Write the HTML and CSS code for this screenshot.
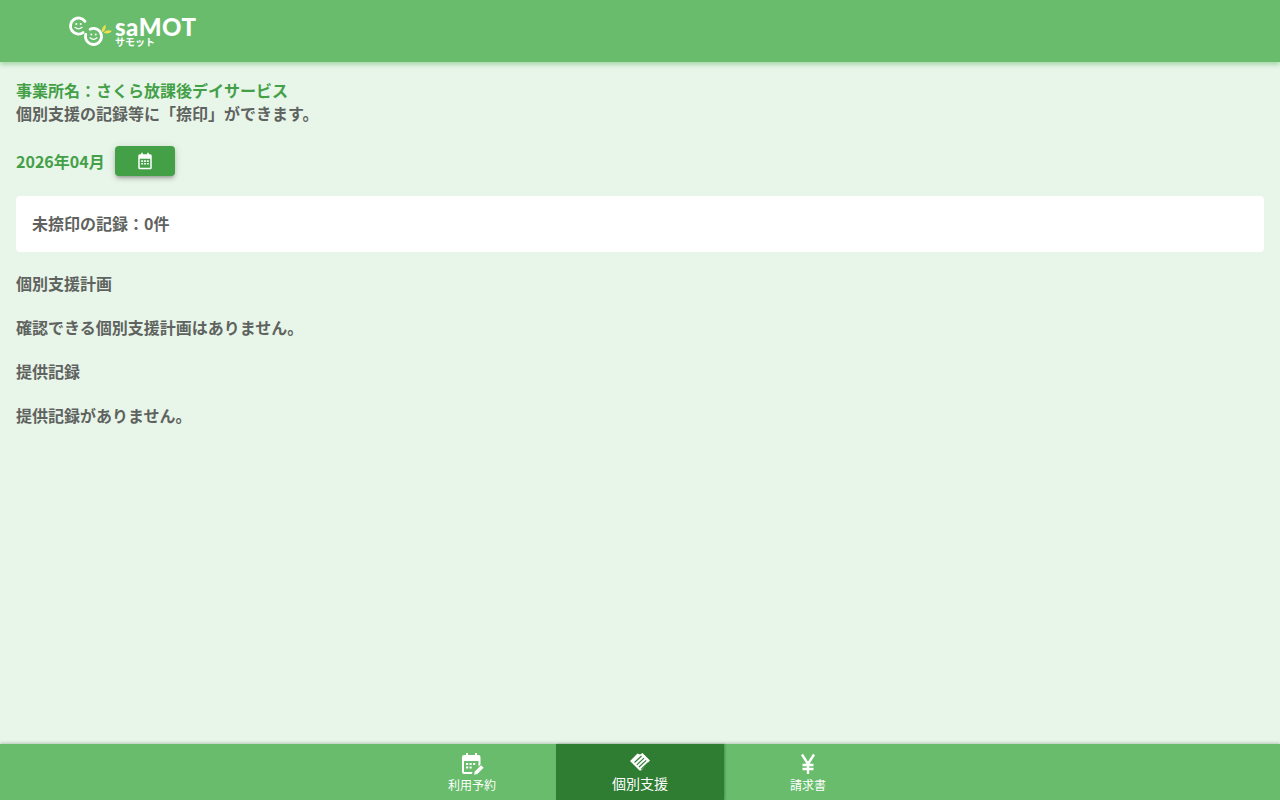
FILE: index.html
```html
<!DOCTYPE html>
<html lang="ja">
<head>
<meta charset="utf-8">
<title>saMOT</title>
<link rel="stylesheet" href="styles.css">
</head>
<body>
<div class="app">
  <header class="topbar">
    <div class="logo">
      <svg class="logo-mark" width="46" height="34" viewBox="0 0 46 34">
        <g fill="none" stroke="#fff" stroke-width="2.800" stroke-linecap="round">
          <path d="M17 7.400 A8 8 0 1 0 15.100 18.550"/>
          <path d="M22.120 15.250 A8 8 0 1 1 17.770 20.430"/>
        </g>
        <g fill="#fff">
          <circle cx="8.300" cy="10" r="1"/><circle cx="12.700" cy="10" r="1"/>
          <circle cx="23.300" cy="20.500" r="1"/><circle cx="27.700" cy="20.500" r="1"/>
        </g>
        <g fill="none" stroke="#fff" stroke-width="1.200" stroke-linecap="round">
          <path d="M7 13.300 Q10.500 16.300 14 13.300"/>
          <path d="M22 23.800 Q25.500 26.800 29 23.800"/>
        </g>
        <path d="M33.500 17.500 Q34 13 37.500 10.500 Q38.500 15 35 18Z" fill="#f0e050"/>
        <path d="M35.500 18.500 Q39 15 44 17 Q41 21 35.500 18.500Z" fill="#f0e050"/>
      </svg>
      <div class="logo-text">
        <span class="logo-name">saMOT</span>
        <span class="logo-kana">サモット</span>
      </div>
    </div>
  </header>

  <main class="content">
    <p class="line accent">事業所名：さくら放課後デイサービス</p>
    <p class="line line-second">個別支援の記録等に「捺印」ができます。</p>
    <div class="date-row">
      <span class="accent">2026年04月</span>
      <button class="cal-btn" type="button" aria-label="カレンダー">
        <svg width="18" height="18" viewBox="0 0 24 24"><path fill="#fff" fill-rule="evenodd" d="M7 1h2v2h6V1h2v2h2a2 2 0 0 1 2 2v16a2 2 0 0 1-2 2H5a2 2 0 0 1-2-2V5a2 2 0 0 1 2-2h2zM5 9v12h14V9zm2 2h2.500v2.200H7zm3.800 0h2.400v2.200h-2.400zm3.700 0H17v2.200h-2.500zM7 14.500h2.500v2.200H7zm3.800 0h2.400v2.200h-2.400zm3.700 0H17v2.200h-2.500z"/></svg>
      </button>
    </div>
    <div class="card">未捺印の記録：0件</div>
    <p class="section">個別支援計画</p>
    <p class="section">確認できる個別支援計画はありません。</p>
    <p class="section">提供記録</p>
    <p class="section">提供記録がありません。</p>
  </main>

  <nav class="bottom-nav">
    <a class="nav-item">
      <svg width="24" height="24" viewBox="0 0 24 24"><path fill="#fff" fill-rule="evenodd" d="M6 1h2v2h7V1h2v2h1.500a2 2 0 0 1 2 2v7.500l-2 2V9H4v11h8.500l-.7 2H4a2 2 0 0 1-2-2V5a2 2 0 0 1 2-2h2zM6 11h2.200v2H6zm3.500 0h2.200v2H9.500zm3.500 0h2.200v2H13zM6 14.500h2.200v2H6zm3.500 0h2.200v2H9.500z"/><path fill="#fff" d="M14 22.800l.8-3.300 6.300-6.300 2.500 2.500-6.300 6.300z"/></svg>
      <span class="nav-label">利用予約</span>
    </a>
    <a class="nav-item active">
      <svg width="24" height="24" viewBox="0 1.500 24 24">
        <path fill="#fff" d="M2 11.500 9.500 4l2.500 1 2.500-1.500L22 11l-8.500 9.500c-.8.800-1.700.8-2.500 0z"/>
        <g fill="none" stroke="#2e7d32" stroke-width="1.100">
          <path d="M6.500 13 13.500 6.500"/>
          <path d="M8.800 15.300 16 8.700"/>
          <path d="M11 17.500 18.200 10.800"/>
          <path d="M13.200 19.700 20.500 13"/>
        </g>
      </svg>
      <span class="nav-label">個別支援</span>
    </a>
    <a class="nav-item">
      <svg width="24" height="24" viewBox="0 0 24 24"><path fill="none" stroke="#fff" stroke-width="2.400" d="M6 2.500l6 9.500 6-9.500M12 12v10M6.500 13h11M6.500 17h11"/></svg>
      <span class="nav-label">請求書</span>
    </a>
  </nav>
</div>
</body>
</html>
```
FILE: styles.css
```css
* { box-sizing: border-box; }
html, body { margin: 0; height: 100%; }
body {
  font-family: "Noto Sans CJK JP", "Noto Sans", sans-serif;
  font-size: 16px;
  line-height: 24px;
  font-weight: 700;
  color: #5f6360;
  background: #e8f5e9;
}
.app {
  height: 800px;
  display: flex;
  flex-direction: column;
  overflow: hidden;
}
.topbar {
  height: 62px;
  flex: none;
  background: #68bc6c;
  box-shadow: 0 3px 4px rgba(102, 187, 106, .45);
  display: flex;
  align-items: center;
  padding-left: 68px;
}
.logo { display: flex; align-items: flex-start; }
.logo-mark { display: block; }
.logo-text {
  display: flex;
  flex-direction: column;
  color: #fff;
  margin-left: 1px;
  padding-top: 3px;
  font-family: "Lato", "Noto Sans", sans-serif;
}
.logo-name { font-size: 24px; line-height: 20px; font-weight: 900; letter-spacing: .5px; }
.logo-kana {
  font-family: "Noto Sans CJK JP", sans-serif;
  font-size: 10px;
  line-height: 10px;
}
.content {
  flex: 1;
  padding: 16px 16px 0;
}
.line { margin: 0; }
.line-second { margin-top: -1px; }
.accent { color: #43a047; }
.date-row {
  display: flex;
  align-items: center;
  gap: 10px;
  margin-top: 21px;
}
.cal-btn {
  width: 60px;
  height: 30px;
  border: 0;
  padding: 0;
  border-radius: 4px;
  background: #43a047;
  box-shadow: 0 3px 3px -2px rgba(0,0,0,.2), 0 3px 4px rgba(0,0,0,.14), 0 1px 8px rgba(0,0,0,.12);
  display: flex;
  align-items: center;
  justify-content: center;
}
.card {
  margin-top: 20px;
  height: 56px;
  padding: 15px 16px;
  background: #fff;
  border-radius: 4px;
  margin-bottom: -1px;
}
.section { margin: 20px 0 0; }
.bottom-nav {
  height: 56px;
  flex: none;
  background: #68bc6c;
  box-shadow: 0 -1px 3px rgba(0,0,0,.2);
  display: flex;
  justify-content: center;
}
.nav-item {
  width: 168px;
  display: flex;
  flex-direction: column;
  align-items: center;
  justify-content: center;
  color: #fff;
  font-weight: 400;
  font-size: 12px;
  line-height: 16px;
  gap: 1px;
}
.nav-item.active {
  background: #2e7d32;
  font-size: 14px;
  gap: 0;
  padding-bottom: 2px;
  box-shadow: 1px 0 2px rgba(0,0,0,.25);
}
.nav-label { display: block; }
```
